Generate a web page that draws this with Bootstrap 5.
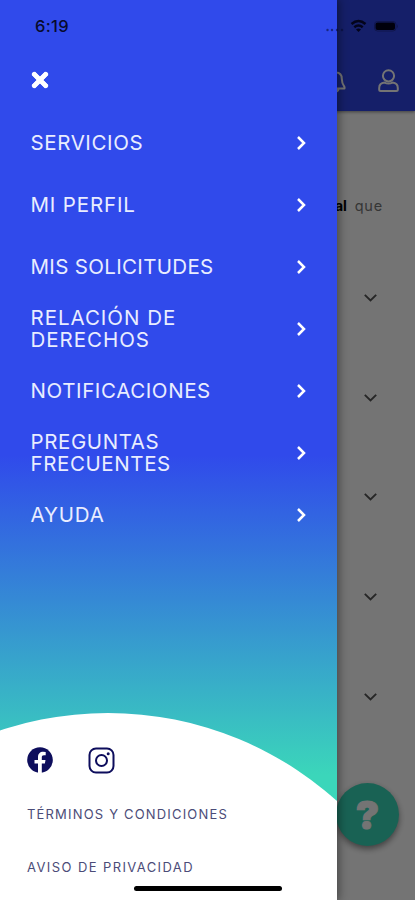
<!DOCTYPE html>
<html lang="es">
<head>
<meta charset="utf-8">
<meta name="viewport" content="width=device-width, initial-scale=1">
<title>Menú</title>
<link href="https://cdn.jsdelivr.net/npm/bootstrap@5.3.0/dist/css/bootstrap.min.css" rel="stylesheet">
<style>
  body { font-family: Inter, "Open Sans", sans-serif; height: 900px; overflow: hidden; background: #fff; }
  svg { display: block; flex: none; }
  .app-page { height: 900px; }
  .app-header { height: 111px; padding: 69px 16px 0 0; gap: 32px; background: #3044e6; color: #fff; box-shadow: 0 1px 3px rgba(0,0,0,.45); }
  .intro { height: 137px; padding: 86px 32px 0 0; font-size: 14.5px; line-height: 18px; color: #777; letter-spacing: .8px; }
  .intro b { color: #000; font-size: 14px; letter-spacing: 0; margin-right: 3px; }
  .fold { height: 99.75px; padding-right: 38px; color: #555; }
  .fab { right: 16px; top: 783px; width: 63px; height: 63px; background: #38d8b8; color: #fff; font-size: 39px; font-weight: 900; line-height: 1; box-shadow: 0 3px 6px rgba(0,0,0,.45); }
  .fab span { -webkit-text-stroke: 1px #fff; }
  .shade { inset: 0; background: rgba(0,0,0,.545); }
  .drawer { inset: 0 auto 0 0; width: 337px; color: #fff; overflow: hidden;
    background: linear-gradient(#304aeb 455px, #3bd6ba 775px); }
  .drawer-edge { inset: 0 auto 0 0; width: 337px; box-shadow: 1px 0 9px 1px rgba(0,0,0,.4); }
  .close-row { height: 111px; padding: 71px 0 0 31px; }
  .menu-row { height: 62px; padding: 1px 30px 0 30.5px; font-size: 20.5px; line-height: 22px; color: #e9edff; }
  .menu-row svg { color: #fff; }
  .ls-3 { letter-spacing: .33px; }
  .ls-6 { letter-spacing: .6px; }
  .ls-8 { letter-spacing: .85px; }
  .ls-10 { letter-spacing: .97px; }
  .drawer-foot { height: 187px; padding: 34px 27px 0; color: #4b4c78; }
  .hill { left: -234px; top: 713px; width: 684px; height: 684px; background: #fff; }
  .socials { gap: 35px; color: #0d0d5c; }
  .legal { font-size: 13px; line-height: 16px; }
  .legal-terms { margin-top: 32px; letter-spacing: 1.18px; }
  .legal-privacy { margin-top: 37px; letter-spacing: 1.4px; }
  .status { inset: 0 0 auto 0; height: 52px; padding: 0 17px 0 35px; color: #070b2d; }
  .clock { font-size: 16.5px; font-weight: 500; letter-spacing: .3px; }
  .home-bar { left: 134px; top: 886px; width: 148px; height: 5px; background: #000; }
</style>
<script src="https://cdn.jsdelivr.net/npm/bootstrap@5.3.0/dist/js/bootstrap.bundle.min.js"></script>
</head>
<body class="position-relative">

<main class="app-page">
  <header class="app-header d-flex justify-content-end align-items-start">
    <svg width="20" height="24" viewBox="0 0 20 24" fill="none" stroke="currentColor" stroke-width="2" stroke-linejoin="round" stroke-linecap="round"><path d="M10 1.5V3.5M10 3.5C6 3.5 4.2 6.500 4.200 10C4.200 14.500 3 16 1.500 18V19.500H18.500V18C17 16 15.800 14.500 15.800 10C15.800 6.500 14 3.500 10 3.500ZM7.500 20C8 23 12 23 12.500 20"/></svg>
    <svg width="21" height="24" viewBox="0 0 21 24" fill="none" stroke="currentColor" stroke-width="2" stroke-linejoin="round"><circle cx="10.500" cy="6.800" r="5.600"/><path d="M6.500 13.600C3.500 13.900 1.200 16 1.200 19V20.500Q1.200 22 2.700 22H18.300Q19.800 22 19.800 20.500V19C19.800 16 17.500 13.900 14.500 13.600Q10.500 15.600 6.500 13.600Z"/></svg>
  </header>
  <p class="intro m-0 text-end"><b>al</b> que</p>
  <div class="fold d-flex justify-content-end align-items-center"><svg width="13" height="8" viewBox="0 0 13 8" fill="none" stroke="currentColor" stroke-width="1.900"><path d="M.8 .8L6.500 6.500L12.200 .8"/></svg></div>
  <div class="fold d-flex justify-content-end align-items-center"><svg width="13" height="8" viewBox="0 0 13 8" fill="none" stroke="currentColor" stroke-width="1.900"><path d="M.8 .8L6.500 6.500L12.200 .8"/></svg></div>
  <div class="fold d-flex justify-content-end align-items-center"><svg width="13" height="8" viewBox="0 0 13 8" fill="none" stroke="currentColor" stroke-width="1.900"><path d="M.8 .8L6.500 6.500L12.200 .8"/></svg></div>
  <div class="fold d-flex justify-content-end align-items-center"><svg width="13" height="8" viewBox="0 0 13 8" fill="none" stroke="currentColor" stroke-width="1.900"><path d="M.8 .8L6.500 6.500L12.200 .8"/></svg></div>
  <div class="fold d-flex justify-content-end align-items-center"><svg width="13" height="8" viewBox="0 0 13 8" fill="none" stroke="currentColor" stroke-width="1.900"><path d="M.8 .8L6.500 6.500L12.200 .8"/></svg></div>
  <button class="fab btn border-0 p-0 rounded-circle position-absolute d-flex align-items-center justify-content-center"><span>?</span></button>
</main>

<div class="shade position-absolute"></div>
<div class="drawer-edge position-absolute"></div>

<aside class="drawer position-absolute d-flex flex-column">
  <div class="hill position-absolute rounded-circle"></div>
  <div class="close-row">
    <svg width="18" height="18" viewBox="0 0 18 18" fill="none" stroke="currentColor" stroke-linecap="round"><path stroke-width="4.600" d="M3.200 3.200L14.800 14.800M14.800 3.200L3.200 14.800"/><path stroke-width="4.600" stroke-linecap="butt" d="M2.400 2.400L15.600 15.600M15.600 2.400L2.400 15.600"/></svg>
  </div>
  <nav class="flex-grow-1">
    <div class="menu-row d-flex align-items-center justify-content-between"><span class="ls-6">SERVICIOS</span><svg width="11" height="14" viewBox="0 0 11 14" fill="none" stroke="currentColor" stroke-width="2.500"><path d="M2 1L8 7L2 13"/></svg></div>
    <div class="menu-row d-flex align-items-center justify-content-between"><span class="ls-8">MI PERFIL</span><svg width="11" height="14" viewBox="0 0 11 14" fill="none" stroke="currentColor" stroke-width="2.500"><path d="M2 1L8 7L2 13"/></svg></div>
    <div class="menu-row d-flex align-items-center justify-content-between"><span class="ls-3">MIS SOLICITUDES</span><svg width="11" height="14" viewBox="0 0 11 14" fill="none" stroke="currentColor" stroke-width="2.500"><path d="M2 1L8 7L2 13"/></svg></div>
    <div class="menu-row d-flex align-items-center justify-content-between"><span class="ls-10">RELACIÓN DE<br>DERECHOS</span><svg width="11" height="14" viewBox="0 0 11 14" fill="none" stroke="currentColor" stroke-width="2.500"><path d="M2 1L8 7L2 13"/></svg></div>
    <div class="menu-row d-flex align-items-center justify-content-between"><span class="ls-6">NOTIFICACIONES</span><svg width="11" height="14" viewBox="0 0 11 14" fill="none" stroke="currentColor" stroke-width="2.500"><path d="M2 1L8 7L2 13"/></svg></div>
    <div class="menu-row d-flex align-items-center justify-content-between"><span class="ls-6">PREGUNTAS<br>FRECUENTES</span><svg width="11" height="14" viewBox="0 0 11 14" fill="none" stroke="currentColor" stroke-width="2.500"><path d="M2 1L8 7L2 13"/></svg></div>
    <div class="menu-row d-flex align-items-center justify-content-between"><span class="ls-8">AYUDA</span><svg width="11" height="14" viewBox="0 0 11 14" fill="none" stroke="currentColor" stroke-width="2.500"><path d="M2 1L8 7L2 13"/></svg></div>
  </nav>
  <footer class="drawer-foot position-relative">
    <div class="socials d-flex">
      <svg width="26" height="26" viewBox="0 0 26 26"><circle cx="13" cy="13" r="12.800" fill="currentColor"/><path d="M11 26V16.500H7.500V13H11V10.300C11 6.700 13 4.800 16.200 4.800Q17.700 4.800 18.700 5.100V8.200H17C15.400 8.200 14.800 9.100 14.800 10.300V13H18.500L17.900 16.500H14.800V26Z" fill="#fff"/></svg>
      <svg width="27" height="27" viewBox="0 0 27 27" fill="none" stroke="currentColor" stroke-width="2"><rect x="1.500" y="1.500" width="24" height="24" rx="6.500"/><circle cx="13.500" cy="13.500" r="5.500"/><circle cx="20.200" cy="6.800" r="1.500" fill="currentColor" stroke="none"/></svg>
    </div>
    <div class="legal legal-terms">TÉRMINOS Y CONDICIONES</div>
    <div class="legal legal-privacy">AVISO DE PRIVACIDAD</div>
  </footer>
</aside>

<div class="status position-absolute d-flex align-items-center">
  <span class="clock me-auto">6:19</span>
  <svg width="73" height="14" viewBox="0 0 73 14" fill="currentColor">
    <g opacity=".55"><circle cx="2.500" cy="11" r="1.200"/><circle cx="7" cy="11" r="1.200"/><circle cx="12" cy="11" r="1.200"/><circle cx="17" cy="11" r="1.200"/></g>
    <g fill="none" stroke="#03041a" stroke-width="2.500"><path d="M26.500 5Q33.500 -1 40.500 5M29.300 8.200Q33.500 4.800 37.700 8.200"/></g>
    <path d="M31 10.400Q33.500 8.700 36 10.400L33.500 13Z" fill="#03041a"/>
    <rect x="49.500" y="2.500" width="21.500" height="9.500" rx="3" fill="none" stroke="#10164c"/><rect x="50.500" y="3.500" width="19.500" height="7.500" rx="2" fill="#00000c"/><path d="M72 5.300Q73.500 7.200 72 9.200Z" fill="#10164c"/>
  </svg>
</div>
<div class="home-bar position-absolute rounded-pill"></div>
</body>
</html>
